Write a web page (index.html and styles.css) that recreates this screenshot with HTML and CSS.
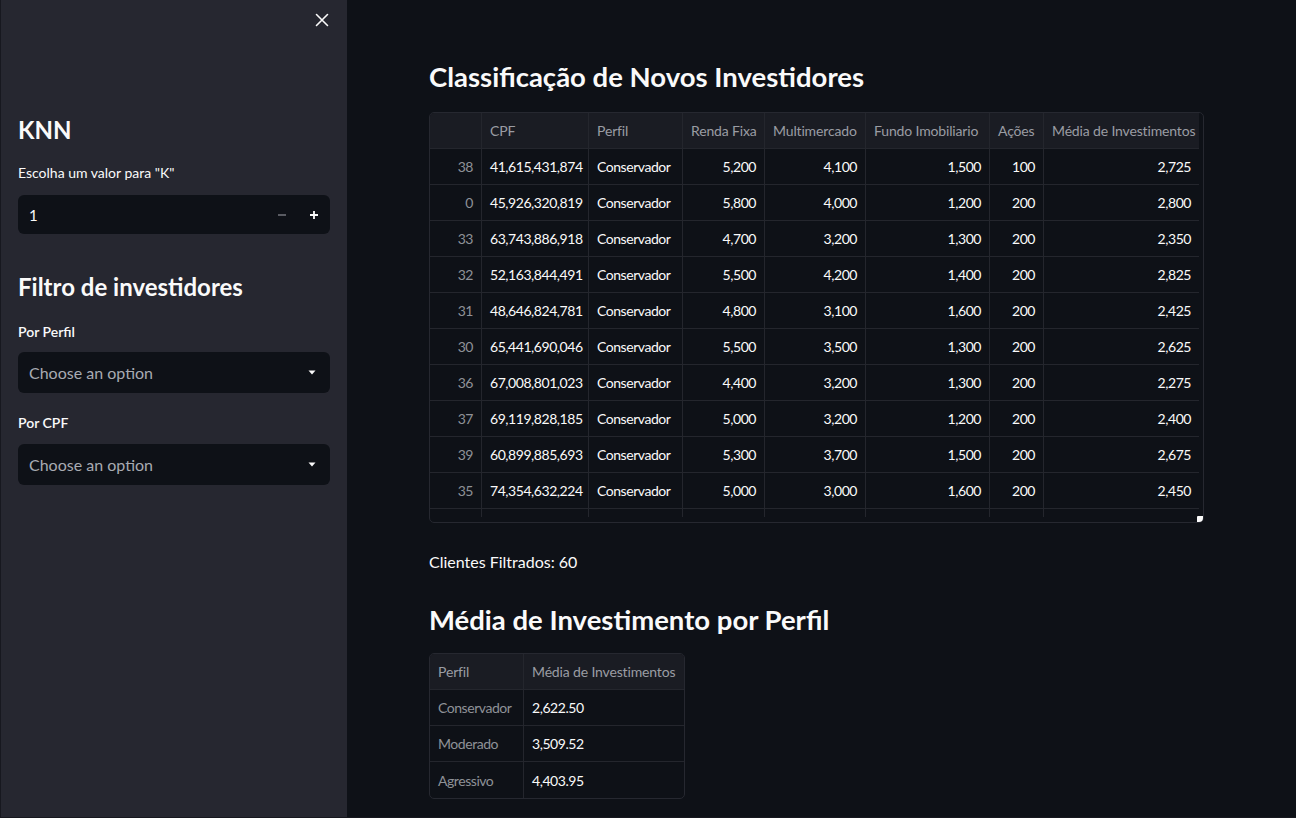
FILE: index.html
```html
<!DOCTYPE html>
<html lang="pt">
<head>
<meta charset="utf-8">
<title>Classificação de Novos Investidores</title>
<link rel="stylesheet" href="styles.css">
</head>
<body>
<div class="app">
  <aside class="sidebar">
    <div class="sb-top">
      <button class="close" aria-label="Close">
        <svg width="14" height="14" viewBox="0 0 14 14"><path d="M1.5 1.5 L12.5 12.5 M12.5 1.5 L1.5 12.5" stroke="#fafafa" stroke-width="1.6" stroke-linecap="round"/></svg>
      </button>
    </div>
    <div class="sb-content">
      <h3 class="sb-h first">KNN</h3>
      <div class="sb-label l1">Escolha um valor para "K"</div>
      <div class="numinput">
        <span class="num-val">1</span>
        <span class="num-btn minus">
          <svg width="10" height="10" viewBox="0 0 10 10"><path d="M1 5 H9" stroke="#6d6f76" stroke-width="1.6"/></svg>
        </span>
        <span class="num-btn plus">
          <svg width="10" height="10" viewBox="0 0 10 10"><path d="M1 5 H9 M5 1 V9" stroke="#fafafa" stroke-width="1.8"/></svg>
        </span>
      </div>
      <h3 class="sb-h second">Filtro de investidores</h3>
      <div class="sb-label l2">Por Perfil</div>
      <div class="select s1">
        <span class="placeholder">Choose an option</span>
        <svg class="caret" width="8" height="5" viewBox="0 0 8 5"><path d="M0.5 0.5 H7.5 L4 4.5 Z" fill="#fafafa"/></svg>
      </div>
      <div class="sb-label l3">Por CPF</div>
      <div class="select s2">
        <span class="placeholder">Choose an option</span>
        <svg class="caret" width="8" height="5" viewBox="0 0 8 5"><path d="M0.5 0.5 H7.5 L4 4.5 Z" fill="#fafafa"/></svg>
      </div>
    </div>
  </aside>

  <main class="main">
    <h2 class="title">Classificação de Novos Investidores</h2>

    <div class="grid-frame big">
      <div class="grid-scroll">
        <table class="grid g1">
          <colgroup>
            <col class="c52"><col class="c107"><col class="c94"><col class="c82"><col class="c101"><col class="c124"><col class="c54"><col class="c155">
          </colgroup>
          <thead>
            <tr><th></th><th>CPF</th><th>Perfil</th><th>Renda Fixa</th><th>Multimercado</th><th>Fundo Imobiliario</th><th>Ações</th><th class="last">Média de Investimentos</th></tr>
          </thead>
          <tbody>
            <tr><td class="idx">38</td><td>41,615,431,874</td><td>Conservador</td><td class="n">5,200</td><td class="n">4,100</td><td class="n">1,500</td><td class="n">100</td><td class="n last">2,725</td></tr>
            <tr><td class="idx">0</td><td>45,926,320,819</td><td>Conservador</td><td class="n">5,800</td><td class="n">4,000</td><td class="n">1,200</td><td class="n">200</td><td class="n last">2,800</td></tr>
            <tr><td class="idx">33</td><td>63,743,886,918</td><td>Conservador</td><td class="n">4,700</td><td class="n">3,200</td><td class="n">1,300</td><td class="n">200</td><td class="n last">2,350</td></tr>
            <tr><td class="idx">32</td><td>52,163,844,491</td><td>Conservador</td><td class="n">5,500</td><td class="n">4,200</td><td class="n">1,400</td><td class="n">200</td><td class="n last">2,825</td></tr>
            <tr><td class="idx">31</td><td>48,646,824,781</td><td>Conservador</td><td class="n">4,800</td><td class="n">3,100</td><td class="n">1,600</td><td class="n">200</td><td class="n last">2,425</td></tr>
            <tr><td class="idx">30</td><td>65,441,690,046</td><td>Conservador</td><td class="n">5,500</td><td class="n">3,500</td><td class="n">1,300</td><td class="n">200</td><td class="n last">2,625</td></tr>
            <tr><td class="idx">36</td><td>67,008,801,023</td><td>Conservador</td><td class="n">4,400</td><td class="n">3,200</td><td class="n">1,300</td><td class="n">200</td><td class="n last">2,275</td></tr>
            <tr><td class="idx">37</td><td>69,119,828,185</td><td>Conservador</td><td class="n">5,000</td><td class="n">3,200</td><td class="n">1,200</td><td class="n">200</td><td class="n last">2,400</td></tr>
            <tr><td class="idx">39</td><td>60,899,885,693</td><td>Conservador</td><td class="n">5,300</td><td class="n">3,700</td><td class="n">1,500</td><td class="n">200</td><td class="n last">2,675</td></tr>
            <tr><td class="idx">35</td><td>74,354,632,224</td><td>Conservador</td><td class="n">5,000</td><td class="n">3,000</td><td class="n">1,600</td><td class="n">200</td><td class="n last">2,450</td></tr>
            <tr class="partial"><td></td><td></td><td></td><td></td><td></td><td></td><td></td><td class="last"></td></tr>
          </tbody>
        </table>
      </div>
      <span class="resize"></span>
    </div>

    <p class="count">Clientes Filtrados: 60</p>

    <h2 class="title t2">Média de Investimento por Perfil</h2>

    <div class="grid-frame small">
      <table class="grid g2">
        <colgroup><col class="c94"><col class="c160"></colgroup>
        <thead>
          <tr><th>Perfil</th><th class="last">Média de Investimentos</th></tr>
        </thead>
        <tbody>
          <tr><td class="idx l">Conservador</td><td class="last">2,622.50</td></tr>
          <tr><td class="idx l">Moderado</td><td class="last">3,509.52</td></tr>
          <tr class="end"><td class="idx l">Agressivo</td><td class="last">4,403.95</td></tr>
        </tbody>
      </table>
    </div>
  </main>
</div>
</body>
</html>
```

FILE: styles.css
```css
* { box-sizing: border-box; }

html, body {
  margin: 0;
  padding: 0;
  height: 100%;
  background: #15161d;
}

body {
  font-family: "Source Sans Pro", Lato, "Noto Sans", sans-serif;
  color: #fafafa;
}

.app {
  display: flex;
  width: 1296px;
  height: 818px;
  border-left: 1px solid #17181f;
  border-bottom: 1px solid #17181f;
  background: #0e1117;
  overflow: hidden;
}

/* Sidebar */
.sidebar {
  width: 346px;
  flex: none;
  background: #262730;
  display: flex;
  flex-direction: column;
}

.sb-top {
  height: 40px;
  display: flex;
  justify-content: flex-end;
  align-items: center;
  padding-right: 13px;
}

.close {
  width: 24px;
  height: 24px;
  border: 0;
  padding: 0;
  background: transparent;
  display: flex;
  align-items: center;
  justify-content: center;
}

.sb-content {
  padding: 0 17px;
  display: flex;
  flex-direction: column;
}

.sb-h {
  margin: 0;
  font-size: 24px;
  line-height: 29px;
  font-weight: 700;
  color: #fafafa;
}
.sb-h.first { margin-top: 75px; }
.sb-h.second { margin-top: 38px; }

.sb-label {
  font-size: 14px;
  line-height: 20px;
  color: #fafafa;
}
.sb-label.l1 { margin-top: 19px; }
.sb-label.l2 { margin-top: 21px; font-weight: 600; }
.sb-label.l3 { margin-top: 20px; font-weight: 600; }

.numinput {
  margin-top: 12px;
  height: 39px;
  background: #0e1117;
  border-radius: 6px;
  display: flex;
  align-items: center;
  padding-left: 11px;
}
.num-val {
  flex: 1;
  font-size: 15px;
  color: #fafafa;
}
.num-btn {
  width: 32px;
  height: 39px;
  display: flex;
  align-items: center;
  justify-content: center;
}

.select {
  height: 41px;
  background: #0e1117;
  border-radius: 6px;
  display: flex;
  align-items: center;
  padding: 0 14px 0 11px;
}
.select.s1 { margin-top: 10px; }
.select.s2 { margin-top: 11px; }
.placeholder {
  flex: 1;
  font-size: 16px;
  color: #a8abb2;
}

/* Main */
.main {
  flex: 1;
  padding: 60px 0 0 82px;
}

.title {
  margin: 0;
  font-size: 27.5px;
  line-height: 34px;
  font-weight: 700;
  color: #fafafa;
}
.title.t2 { margin-top: 29px; }

.count {
  margin: 27px 0 0;
  font-size: 16px;
  line-height: 24px;
  color: #fafafa;
}

.grid-frame {
  position: relative;
  border: 1px solid #262830;
  border-radius: 5px;
  overflow: hidden;
  background: #0e1117;
}
.grid-frame.big {
  margin-top: 18px;
  width: 775px;
  height: 411px;
}
.grid-scroll {
  height: 404px;
  overflow: hidden;
}
.grid-frame.small {
  margin-top: 16px;
  width: 256px;
}

.grid {
  border-collapse: separate;
  border-spacing: 0;
  table-layout: fixed;
  font-size: 14px;
}
.g1 { width: 769px; }
.g2 { width: 254px; }

.c52 { width: 52px; }
.c107 { width: 107px; }
.c94 { width: 94px; }
.c82 { width: 82px; }
.c101 { width: 101px; }
.c124 { width: 124px; }
.c54 { width: 54px; }
.c155 { width: 155px; }
.c160 { width: 160px; }

.grid th, .grid td {
  height: 36px;
  padding: 0 8px;
  border-right: 1px solid #24262d;
  border-bottom: 1px solid #24262d;
  white-space: nowrap;
  overflow: hidden;
  vertical-align: middle;
}
.grid th.last, .grid td.last { border-right: 0; }

.grid th {
  background: #1a1c23;
  color: #9a9ca3;
  font-weight: 400;
  text-align: left;
  letter-spacing: -0.15px;
}

.grid td {
  color: #fafafa;
  text-align: left;
  letter-spacing: -0.45px;
}
.grid td.n { text-align: right; }
.grid td.idx {
  color: #8f9197;
  text-align: right;
}
.grid td.idx.l { text-align: left; }
.grid tr.end td { border-bottom: 0; }

.resize {
  position: absolute;
  right: 0;
  bottom: 0;
  width: 6px;
  height: 6px;
  background: #fafafa;
  border-radius: 1px 0 0 0;
}
```
